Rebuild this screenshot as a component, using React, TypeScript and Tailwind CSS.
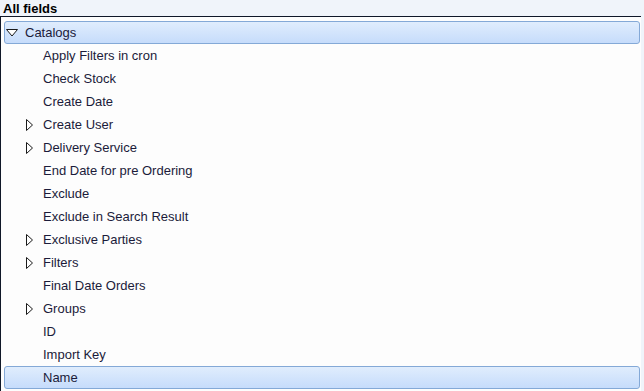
import React from "react";

type Row = { label: string; level: number; expander?: "open" | "closed"; selected?: boolean; highlight?: boolean };

const rows: Row[] = [
  { label: "Catalogs", level: 0, expander: "open", highlight: true },
  { label: "Apply Filters in cron", level: 1 },
  { label: "Check Stock", level: 1 },
  { label: "Create Date", level: 1 },
  { label: "Create User", level: 1, expander: "closed" },
  { label: "Delivery Service", level: 1, expander: "closed" },
  { label: "End Date for pre Ordering", level: 1 },
  { label: "Exclude", level: 1 },
  { label: "Exclude in Search Result", level: 1 },
  { label: "Exclusive Parties", level: 1, expander: "closed" },
  { label: "Filters", level: 1, expander: "closed" },
  { label: "Final Date Orders", level: 1 },
  { label: "Groups", level: 1, expander: "closed" },
  { label: "ID", level: 1 },
  { label: "Import Key", level: 1 },
  { label: "Name", level: 1, selected: true },
];

function Expander({ open }: { open: boolean }) {
  if (open) {
    return (
      <svg width="12" height="8" viewBox="0 0 12 8" aria-hidden>
        <path d="M0.5 0.5 L11.5 0.5 L6 7 Z" fill="white" stroke="#1a1a1a" strokeWidth="1" />
      </svg>
    );
  }
  return (
    <svg width="7" height="12" viewBox="0 0 7 12" aria-hidden>
      <path d="M0.5 0.5 L6.5 6 L0.5 11.5 Z" fill="white" stroke="#1a1a1a" strokeWidth="1" />
    </svg>
  );
}

export default function App() {
  return (
    <div
      className="w-[644px] h-[391px] overflow-hidden bg-[#f0f4fa] flex flex-col"
      style={{ fontFamily: '"Liberation Sans", Arial, sans-serif' }}
    >
      <div className="h-[16px] px-[3px] flex items-center text-[13px] font-bold text-black leading-none">
        All fields
      </div>
      <div className="flex-1 mr-[3px] border-t border-l border-[#101828] bg-[#fdfdfd] pt-[4px] pl-[3px] pr-[1px]">
        {rows.map((r) => {
          const active = r.selected || r.highlight;
          return (
            <div
              key={r.label}
              className={
                "h-[23px] flex items-center text-[13px] text-[#1b1b3a] rounded-[3px] border " +
                (active
                  ? "border-[#84a9d7] bg-gradient-to-b from-[#e0edfd] to-[#c6dcfb]"
                  : "border-transparent")
              }
            >
              <div
                className={
                  "flex items-center shrink-0 " +
                  (r.level === 0 ? "w-[20px] pl-[1px]" : "w-[38px] pl-[21px]")
                }
              >
                {r.expander && <Expander open={r.expander === "open"} />}
              </div>
              <span className="pt-px">{r.label}</span>
            </div>
          );
        })}
      </div>
    </div>
  );
}
